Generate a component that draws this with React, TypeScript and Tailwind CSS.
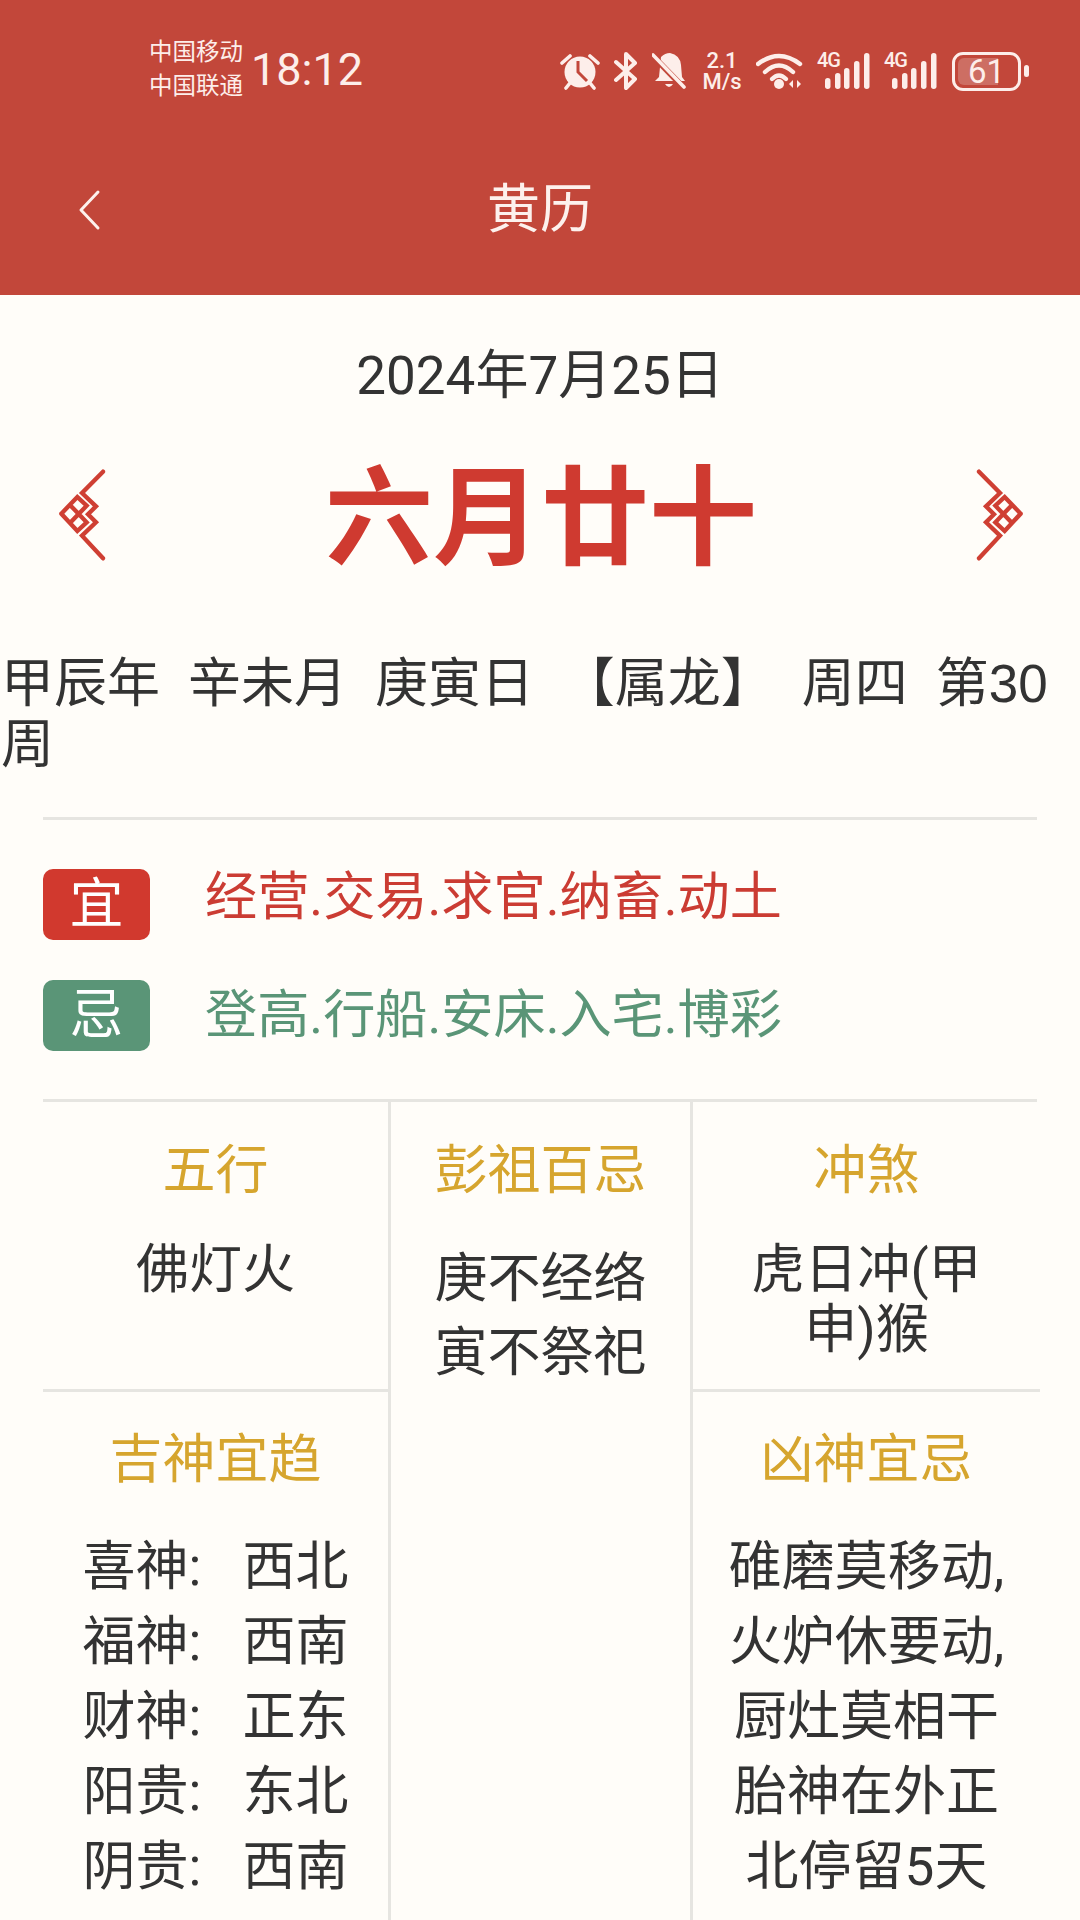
import React from "react";

const FONT = "font-['Roboto','Noto_Sans_CJK_SC',sans-serif]";

function Ornament({ flip }: { flip?: boolean }) {
  return (
    <svg width="50" height="100" viewBox="0 0 150 300" className={flip ? "-scale-x-100" : ""} fill="none" stroke="#cf3f33" strokeWidth="13" strokeLinecap="round" strokeLinejoin="miter">
      <path d="M135 8 L72 72 L114 112 L90 136 L114 160 L72 200 L135 268" />
      <path d="M10 134 L58 84 L86 110 L38 160 M10 134 L58 186 L86 160 L38 110" />
    </svg>
  );
}

function Alarm() {
  return (
    <svg width="40" height="38" viewBox="0 0 40 38" fill="none">
      <circle cx="20" cy="20" r="15.5" fill="#fdeeea" />
      <path d="M18 9 V20 L27 29" stroke="#c2473a" strokeWidth="3" />
      <path d="M2 11 L10 4 M38 11 L30 4 M6 36 L10 31 M34 36 L30 31" stroke="#fdeeea" strokeWidth="3.6" strokeLinecap="round" />
    </svg>
  );
}

function Bluetooth() {
  return (
    <svg width="24" height="40" viewBox="0 0 24 40" fill="none" stroke="#fdeeea" strokeWidth="4" strokeLinecap="round" strokeLinejoin="round">
      <path d="M2 11 L21 28 L12 37 V3 L21 12 L2 29" />
    </svg>
  );
}

function BellOff() {
  return (
    <svg width="34" height="38" viewBox="0 0 34 38" fill="none">
      <path d="M9 5 Q13 1 18 1 Q28 3 29 13 L30 25 L33 29 H3 L7 25 Z" fill="#fdeeea" />
      <path d="M13 32 Q17 38 21 32 Z" fill="#fdeeea" />
      <path d="M0 3 L33 37" stroke="#c2473a" strokeWidth="6" />
      <path d="M1 3 L32 35" stroke="#fdeeea" strokeWidth="3.6" strokeLinecap="round" />
    </svg>
  );
}

function Wifi() {
  return (
    <svg width="48" height="38" viewBox="0 0 48 38" fill="none" stroke="#fdeeea" strokeWidth="4.4" strokeLinecap="round">
      <path d="M2 12 Q23 -4 44 12" />
      <path d="M9 20 Q23 7 37 20" />
      <path d="M16 27 Q23 20 30 27" />
      <circle cx="23" cy="32" r="5" fill="#fdeeea" stroke="none" />
      <path d="M37 28 L33 32 L37 36 Z M41 28 L45 32 L41 36 Z" fill="#fdeeea" stroke="none" />
    </svg>
  );
}

function Signal() {
  return (
    <div className="relative w-[54px] h-[38px]">
      <span className="absolute left-0 top-[-2px] text-[20px] leading-[20px] font-medium tracking-[-1px] text-[#fdeeea] font-['Roboto',sans-serif]">4G</span>
      <svg width="54" height="38" viewBox="0 0 54 38" fill="#fdeeea">
        <rect x="8" y="26" width="5.5" height="11" rx="2.7" />
        <rect x="18" y="21" width="5.5" height="16" rx="2.7" />
        <rect x="27" y="16" width="5.5" height="21" rx="2.7" />
        <rect x="37" y="9" width="5.5" height="28" rx="2.7" />
        <rect x="47" y="1" width="5.5" height="36" rx="2.7" />
      </svg>
    </div>
  );
}

function Battery() {
  return (
    <div className="flex items-center gap-[3px] ml-[14px]">
      <div className="relative w-[69px] h-[39px] rounded-[11px] border-[3px] border-[#fdeeea] overflow-hidden flex items-center justify-center">
        <div className="absolute left-[3px] top-[3px] bottom-[3px] w-[64%] rounded-l-[6px] bg-[#cd6e63]" />
        <span className="relative text-[33px] leading-none text-[#fdeeea] font-['Roboto',sans-serif]">61</span>
      </div>
      <div className="w-[5px] h-[12px] rounded-full bg-[#fdeeea]" />
    </div>
  );
}

function StatusBar() {
  return (
    <div className="h-[115px] flex items-start">
      <div className="ml-[149px] mt-[35px] flex flex-col text-[23.5px] leading-[34px] text-[#fdeeea]">
        <span>中国移动</span>
        <span>中国联通</span>
      </div>
      <span className="ml-[8px] mt-[43px] w-[112px] text-[45px] leading-[54px] text-[#fdeeea] font-['Roboto',sans-serif]">18:12</span>
      <div className="ml-[197px] mt-[50px] flex items-center">
        <Alarm />
        <div className="ml-[14px]"><Bluetooth /></div>
        <div className="ml-[14px]"><BellOff /></div>
        <div className="ml-[15px] w-[42px] flex flex-col items-center text-[#fdeeea] text-[22px] leading-[21px] font-medium font-['Roboto',sans-serif]">
          <span>2.1</span>
          <span>M/s</span>
        </div>
        <div className="ml-[13px]"><Wifi /></div>
        <div className="ml-[13px]"><Signal /></div>
        <div className="ml-[13px]"><Signal /></div>
        <Battery />
      </div>
    </div>
  );
}

function Divider() {
  return <div className="h-[3px] bg-[#e6e5e1]" />;
}

function Cell({ title, children, className = "" }: { title: string; children: React.ReactNode; className?: string }) {
  return (
    <div className={"flex flex-col items-center " + className}>
      <div className="text-[53px] leading-[60px] text-[#d6a52e]">{title}</div>
      {children}
    </div>
  );
}

export default function App() {
  return (
    <div className={"w-[1080px] h-[1920px] overflow-hidden bg-[#fffdf9] text-[#333333] " + FONT}>
      <header className="h-[295px] bg-[#c2473a]">
        <StatusBar />
        <div className="relative h-[180px] flex justify-center">
          <span className="text-[53px] leading-[60px] mt-[65px] text-[#fdf1ed]">黄历</span>
          <svg className="absolute left-[78px] top-[74px]" width="24" height="42" viewBox="0 0 24 42" fill="none" stroke="#fdf1ed" strokeWidth="3" strokeLinecap="round" strokeLinejoin="round">
            <path d="M20 3 L3 21 L20 39" />
          </svg>
        </div>
      </header>

      <main>
        <div className="mt-[51px] text-center text-[53px] leading-[60px]">2024年7月25日</div>
        <div className="mt-[48px] pl-[58px] pr-[56px] flex items-center justify-between">
          <Ornament />
          <div className="text-[108px] leading-[130px] font-bold text-[#cf3a30]">六月廿十</div>
          <Ornament flip />
        </div>
        <p className="mt-[69px] pl-[1px] text-[53px] leading-[61px] [word-spacing:-0.75px] font-['Liberation_Sans','Noto_Sans_CJK_SC',sans-serif]">
          甲辰年{"\u00a0\u00a0"}辛未月{"\u00a0\u00a0"}庚寅日{"\u00a0\u00a0"}【属龙】{"\u00a0\u00a0"}周四{"\u00a0\u00a0"}第30周
        </p>

        <section className="mx-[43px] mt-[42px]">
          <Divider />
          <div className="mt-[49px] flex items-center">
            <div className="w-[107px] h-[71px] rounded-[10px] bg-[#d1392e] text-white text-[54px] leading-none flex items-center justify-center">宜</div>
            <div className="ml-[55px] text-[52.2px] leading-[60px] -mt-[13px] text-[#cb3c33]">经营.交易.求官.纳畜.动土</div>
          </div>
          <div className="mt-[40px] flex items-center">
            <div className="w-[107px] h-[71px] rounded-[10px] bg-[#5a9577] text-white text-[54px] leading-none flex items-center justify-center">忌</div>
            <div className="ml-[55px] text-[52.2px] leading-[60px] text-[#5a9577]">登高.行船.安床.入宅.博彩</div>
          </div>
          <div className="mt-[48px]"><Divider /></div>

          <div className="flex h-[900px]">
            <div className="w-[348px] border-r-[3px] border-[#e6e5e1] flex flex-col">
              <Cell title="五行" className="h-[290px] pt-[39px] border-b-[3px] border-[#e6e5e1]">
                <div className="mt-[39px] text-[53px] leading-[60px]">佛灯火</div>
              </Cell>
              <Cell title="吉神宜趋" className="pt-[38px]">
                <div className="mt-[40px] text-[53px] leading-[75px]">
                  {[["喜神", "西北"], ["福神", "西南"], ["财神", "正东"], ["阳贵", "东北"], ["阴贵", "西南"]].map(([a, b]) => (
                    <div key={a} className="flex">
                      <span className="w-[160px]">{a}:</span>
                      <span>{b}</span>
                    </div>
                  ))}
                </div>
              </Cell>
            </div>
            <div className="w-[302px] border-r-[3px] border-[#e6e5e1]">
              <Cell title="彭祖百忌" className="pt-[39px]">
                <div className="mt-[41px] text-[53px] leading-[74px] text-center">庚不经络<br />寅不祭祀</div>
              </Cell>
            </div>
            <div className="w-[347px] -mr-[3px] flex flex-col">
              <Cell title="冲煞" className="h-[290px] pt-[39px] border-b-[3px] border-[#e6e5e1]">
                <div className="mt-[39px] w-[240px] text-center text-[53px] leading-[60px]">虎日冲(甲申)猴</div>
              </Cell>
              <Cell title="凶神宜忌" className="pt-[38px]">
                <div className="mt-[40px] text-[53px] leading-[75px] text-center">
                  <div>碓磨莫移动,</div>
                  <div>火炉休要动,</div>
                  <div>厨灶莫相干</div>
                  <div>胎神在外正</div>
                  <div>北停留5天</div>
                </div>
              </Cell>
            </div>
          </div>
        </section>
      </main>
    </div>
  );
}
